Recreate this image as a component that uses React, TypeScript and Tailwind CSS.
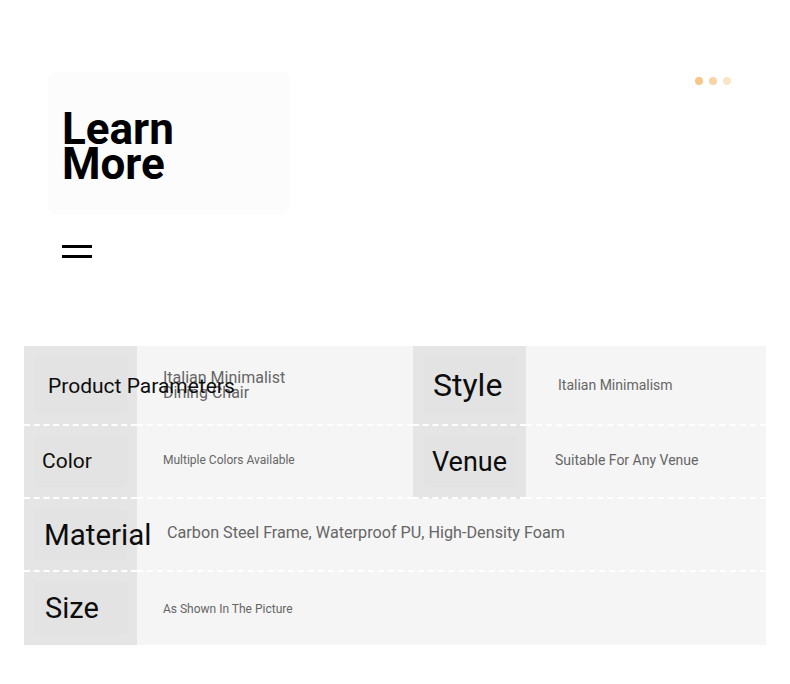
import React from "react";

const cellBorder = "border-b-2 border-dashed border-white";

function Label({ children, cls, border }: { children: React.ReactNode; cls: string; border?: boolean }) {
  return (
    <div className={"w-[113px] shrink-0 h-full bg-[#e5e5e5] p-[10px] relative " + (border ? cellBorder : "")}>
      <div className="w-full h-full bg-[#e3e3e3] rounded-sm" />
      <div className={"absolute inset-0 flex items-center whitespace-nowrap text-[#0d0d0d] " + cls}>{children}</div>
    </div>
  );
}

export default function App() {
  return (
    <div className="w-[790px] h-[684px] bg-white font-['Roboto',sans-serif] overflow-hidden">
      <div className="flex pt-[72px] pl-[48px] pr-[59px]">
        <div className="w-[242px] h-[143px] bg-[#fcfcfc] rounded-lg pl-[14px] pt-[40px]">
          <h1 className="text-[44px] leading-[35px] font-bold text-black">
            Learn
            <br />
            More
          </h1>
        </div>
        <div className="ml-auto flex gap-[6px] pt-[5px] h-fit">
          <span className="w-[8px] h-[8px] rounded-full bg-[#f6c588]" />
          <span className="w-[8px] h-[8px] rounded-full bg-[#f8d3a6]" />
          <span className="w-[8px] h-[8px] rounded-full bg-[#fbe4c8]" />
        </div>
      </div>

      <div className="ml-[62px] mt-[30px] flex flex-col gap-[7px] w-[30px]">
        <span className="h-[3px] bg-black" />
        <span className="h-[3px] bg-black" />
      </div>

      <div className="mx-[24px] mt-[88px] flex flex-col">
        <div className="h-[80px] flex">
          <Label border cls="pl-[24px] pt-[4px] text-[21px]">Product Parameters</Label>
          <div className={"w-[276px] shrink-0 bg-[#f5f5f5] flex items-center pl-[26px] " + cellBorder}>
            <p className="text-[16px] leading-[15px] text-[#666] w-[140px]">Italian Minimalist Dining Chair</p>
          </div>
          <Label border cls="pl-[20px] text-[32px]">Style</Label>
          <div className={"flex-1 bg-[#f5f5f5] flex items-center pl-[32px] text-[14px] text-[#666] " + cellBorder}>
            Italian Minimalism
          </div>
        </div>
        <div className="h-[73px] flex">
          <Label border cls="pl-[18px] text-[21px]">Color</Label>
          <div className={"w-[276px] shrink-0 bg-[#f5f5f5] flex items-center pl-[26px] pb-[4px] text-[12px] text-[#666] " + cellBorder}>
            Multiple Colors Available
          </div>
          <Label border cls="pl-[19px] pt-[2px] text-[27px]">Venue</Label>
          <div className={"flex-1 bg-[#f5f5f5] flex items-center pl-[29px] pb-[2px] text-[14px] text-[#666] " + cellBorder}>
            Suitable For Any Venue
          </div>
        </div>
        <div className="h-[73px] flex">
          <Label border cls="pl-[20px] pt-[2px] text-[29.5px]">Material</Label>
          <div className={"flex-1 bg-[#f5f5f5] flex items-center pl-[30px] pb-[3px] text-[16.2px] text-[#666] " + cellBorder}>
            Carbon Steel Frame, Waterproof PU, High-Density Foam
          </div>
        </div>
        <div className="h-[73px] flex">
          <Label cls="pl-[21px] text-[29px]">Size</Label>
          <div className="flex-1 bg-[#f5f5f5] flex items-center pl-[26px] text-[12px] text-[#666]">As Shown In The Picture</div>
        </div>
      </div>
    </div>
  );
}
